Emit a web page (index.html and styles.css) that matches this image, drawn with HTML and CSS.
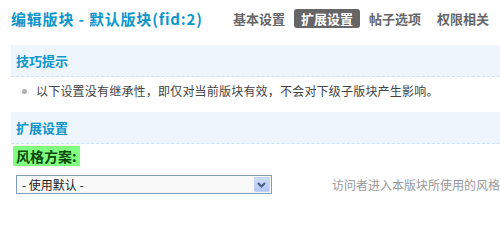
FILE: index.html
```html
<!DOCTYPE html>
<html lang="zh-CN">
<head>
<meta charset="utf-8">
<title>编辑版块</title>
<link rel="stylesheet" href="styles.css">
</head>
<body>
<div class="top">
  <h1 class="title">编辑版块 - 默认版块(fid:2)</h1>
  <ul class="tabs">
    <li class="tab">基本设置</li>
    <li class="tab active">扩展设置</li>
    <li class="tab">帖子选项</li>
    <li class="tab">权限相关</li>
  </ul>
</div>
<div class="section-head">技巧提示</div>
<ul class="tips">
  <li>以下设置没有继承性，即仅对当前版块有效，不会对下级子版块产生影响。</li>
</ul>
<div class="section-head">扩展设置</div>
<div class="label-row"><span class="label">风格方案:</span></div>
<div class="field-row">
  <div class="select">
    <span class="select-text">- 使用默认 -</span>
    <span class="select-btn">
      <svg width="9" height="6" viewBox="0 0 9 6"><path d="M1 1 L4.5 4.5 L8 1" fill="none" stroke="#4a5d80" stroke-width="2"/></svg>
    </span>
  </div>
  <span class="desc">访问者进入本版块所使用的风格</span>
</div>
</body>
</html>
```
FILE: styles.css
```css
html, body {
  margin: 0;
  padding: 0;
  background: #fff;
}
body {
  font-family: "Noto Sans CJK SC", "Liberation Sans", sans-serif;
  font-size: 12px;
  color: #444;
  width: 500px;
  overflow: hidden;
}
.top {
  display: flex;
  justify-content: space-between;
  align-items: flex-start;
  padding: 9px 4px 0 11px;
  height: 45px;
  box-sizing: border-box;
}
.title {
  margin: 0;
  font-size: 15px;
  line-height: 19px;
  font-weight: bold;
  color: #0b96cc;
  letter-spacing: 0.8px;
  white-space: nowrap;
}
.tabs {
  display: flex;
  gap: 2px;
  margin: 0;
  padding: 0;
  list-style: none;
}
.tab {
  padding: 0 7px;
  height: 19px;
  line-height: 19px;
  font-size: 13px;
  font-weight: bold;
  color: #666;
  border-radius: 3px;
  white-space: nowrap;
}
.tab.active {
  background: #666;
  color: #fff;
}
.section-head {
  margin-left: 11px;
  height: 31px;
  line-height: 31px;
  padding-left: 5px;
  background: #eef5fc;
  border-bottom: 1px dashed #cde2f4;
  font-size: 13px;
  font-weight: bold;
  color: #0b96cc;
}
.tips {
  list-style: none;
  margin: 2px 0 9px;
  padding: 0 0 0 36px;
}
.tips li {
  position: relative;
  line-height: 24px;
  color: #444;
  letter-spacing: 0.2px;
  white-space: nowrap;
}
.tips li::before {
  content: "";
  position: absolute;
  left: -14px;
  top: 10px;
  width: 5px;
  height: 5px;
  border-radius: 50%;
  background: #b0b0b0;
}
.label-row {
  padding: 2px 0 0 13px;
  height: 21px;
}
.label {
  display: inline-block;
  background: #80ff80;
  color: #0a4a0a;
  font-weight: bold;
  font-size: 14px;
  line-height: 20px;
  padding: 0 3px 0 3px;
}
.field-row {
  display: flex;
  align-items: center;
  margin-top: 8px;
  padding-left: 16px;
}
.select {
  display: flex;
  align-items: center;
  justify-content: space-between;
  width: 256px;
  height: 19px;
  box-sizing: border-box;
  border: 1px solid #7f9db9;
  background: #f9f9f9;
  padding: 0 1px 0 5px;
}
.select-text {
  color: #222;
  font-size: 12px;
  line-height: 17px;
}
.select-btn {
  display: flex;
  align-items: center;
  justify-content: center;
  width: 16px;
  height: 15px;
  background: linear-gradient(#cfdcfa, #b3c7f5);
  border: 1px solid #c2d3f7;
  box-sizing: border-box;
  border-radius: 1px;
}
.desc {
  margin-left: 60px;
  color: #999;
  white-space: nowrap;
}
```
